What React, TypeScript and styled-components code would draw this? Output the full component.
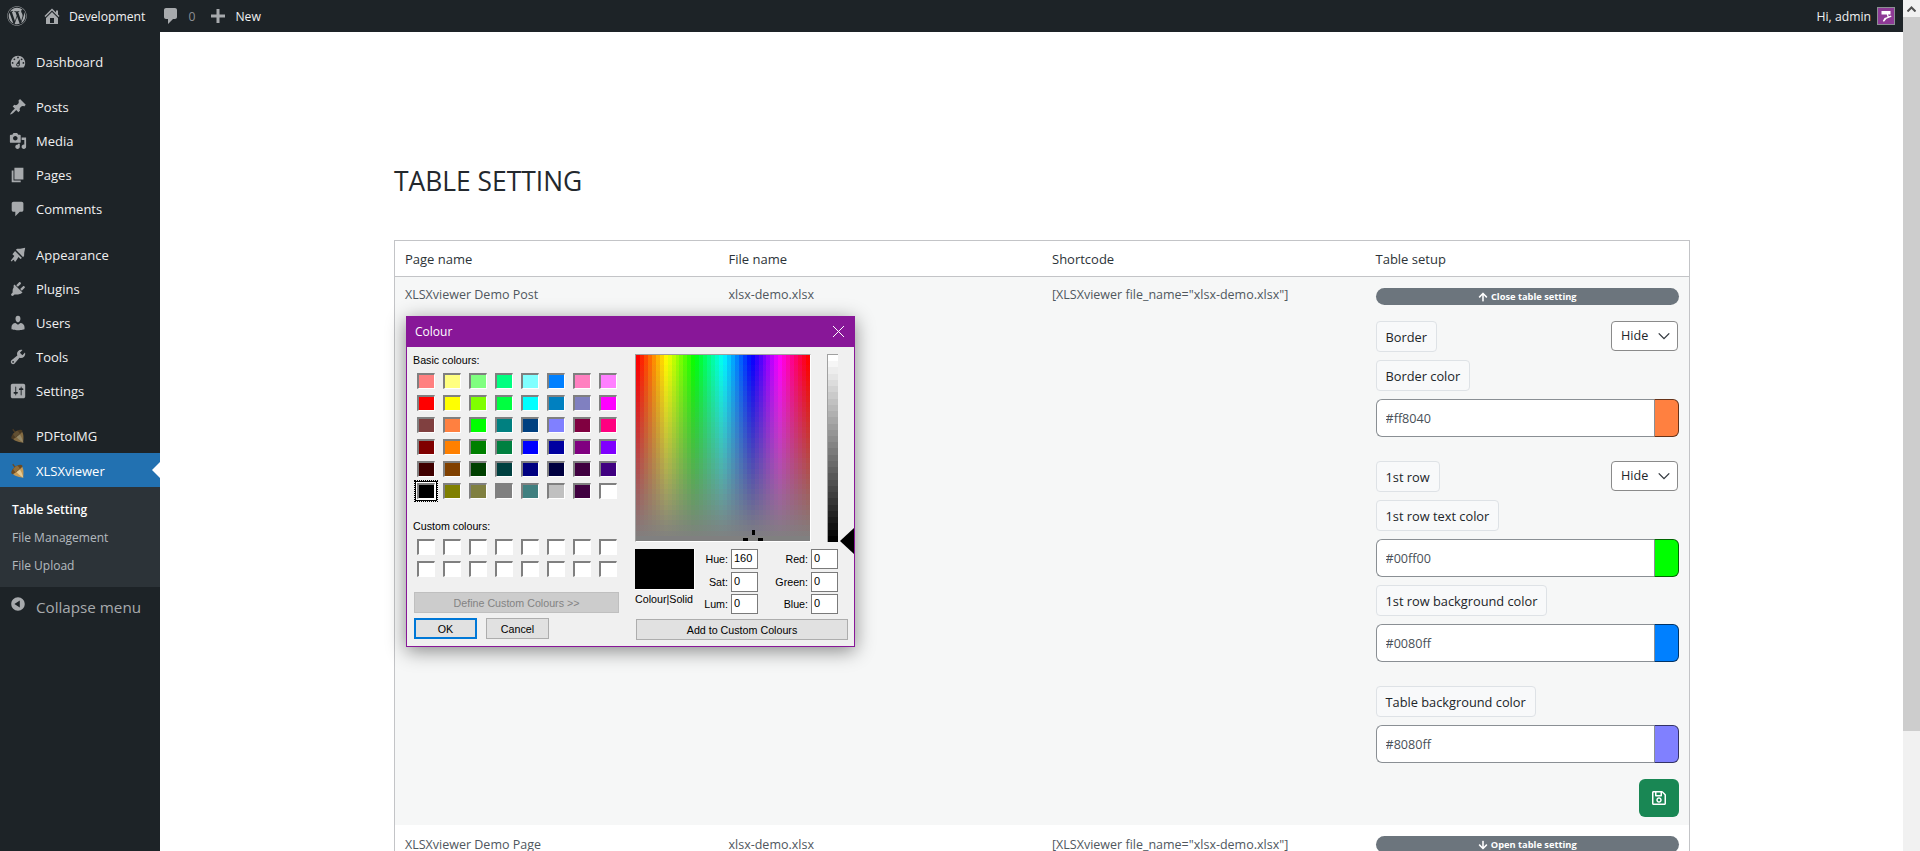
import React from "react";
import styled, { createGlobalStyle } from "styled-components";
import { FaWordpress, FaArrowUp, FaArrowDown, FaRegSave } from "react-icons/fa";

const uiFont = `"Open Sans", "Noto Sans", sans-serif`;
const winFont = `"Liberation Sans", Arial, sans-serif`;

const ICONS: Record<string, string> = {
  dashboard: "M3.76 16h12.48c1.1-1.37 1.76-3.11 1.76-5 0-4.42-3.58-8-8-8s-8 3.58-8 8c0 1.89.66 3.63 1.76 5zM10 4c.55 0 1 .45 1 1s-.45 1-1 1-1-.45-1-1 .45-1 1-1zM6 6c.55 0 1 .45 1 1s-.45 1-1 1-1-.45-1-1 .45-1 1-1zm8 0c.55 0 1 .45 1 1s-.45 1-1 1-1-.45-1-1 .45-1 1-1zm-5.37 5.55L12 7v6c0 1.1-.9 2-2 2s-2-.9-2-2c0-.57.24-1.08.63-1.45zM4 10c.55 0 1 .45 1 1s-.45 1-1 1-1-.45-1-1 .45-1 1-1zm12 0c.55 0 1 .45 1 1s-.45 1-1 1-1-.45-1-1 .45-1 1-1zm-5 3c0-.55-.45-1-1-1s-1 .45-1 1 .45 1 1 1 1-.45 1-1z",
  posts: "M10.44 3.02l1.82-1.82 6.36 6.35-1.83 1.82c-1.05-.68-2.48-.57-3.41.36l-.75.75c-.92.93-1.04 2.35-.35 3.41l-1.83 1.82-2.41-2.41-2.8 2.79c-.42.42-3.38 2.71-3.8 2.29s1.86-3.39 2.28-3.81l2.79-2.79L4.1 9.36l1.83-1.82c1.05.69 2.48.57 3.4-.36l.75-.75c.93-.92 1.05-2.35.36-3.41z",
  media: "M13 11V4c0-.55-.45-1-1-1h-1.67L9 1H5L3.67 3H2c-.55 0-1 .45-1 1v7c0 .55.45 1 1 1h10c.55 0 1-.45 1-1zM7 4.5c1.38 0 2.5 1.12 2.5 2.5S8.38 9.5 7 9.5 4.5 8.38 4.5 7 5.62 4.5 7 4.5zM14 6h5v10.5c0 1.38-1.12 2.5-2.5 2.5S14 17.88 14 16.5s1.12-2.5 2.5-2.5c.17 0 .34.02.5.05V9h-3V6zm-4 8.05V13h2v3.5c0 1.38-1.12 2.5-2.5 2.5S7 17.88 7 16.5 8.12 14 9.5 14c.17 0 .34.02.5.05z",
  pages: "M6 15V2h10v13H6zm-1 1h8v2H3V5h2v11z",
  comments: "M5 2h9c1.1 0 2 .9 2 2v7c0 1.1-.9 2-2 2h-2l-5 5v-5H5c-1.1 0-2-.9-2-2V4c0-1.1.9-2 2-2z",
  appearance: "M7.6 4.2l1.6-1.1 3.2-.1 5.6-1-1.1 5.6-.1 3.2-1.1 1.6zM6.7 5.6l7.7 7.7-1.7 1.1-2.1-2.1-3.5 5.1-1.5-.7.3-1.4-1.6.2-1.1 1.6-1.3-.8 4-5.1-2.1-2.1z",
  plugins: "M13.11 4.36L9.87 7.6 8 5.73l3.24-3.24c.35-.34 1.05-.2 1.56.32.52.51.66 1.21.31 1.55zm-8 1.77l.91-1.12 9.01 9.01-1.19.84c-.71.71-2.63 1.16-3.82 1.16H6.14L4.9 17.26c-.59.59-1.54.59-2.12 0-.59-.58-.59-1.53 0-2.12l1.24-1.24v-1.82c0-1.19.45-3.11 1.16-3.82zm7.26 3.97l3.24-3.24c.34-.35 1.04-.21 1.55.31.52.51.66 1.21.31 1.55l-3.24 3.25z",
  users: "M10 9.25c-2.27 0-2.73-3.44-2.73-3.44C7 4.02 7.82 2 9.97 2c2.16 0 2.98 2.02 2.71 3.81 0 0-.41 3.44-2.68 3.44zm0 2.57L12.72 10c2.39 0 4.52 2.33 4.52 4.53v2.49s-3.65 1.13-7.24 1.13c-3.65 0-7.24-1.13-7.24-1.13v-2.49c0-2.25 1.94-4.48 4.47-4.48z",
  tools: "M16.68 9.77c-1.34 1.34-3.3 1.67-4.95.99l-5.41 6.52c-.99.99-2.59.99-3.57 0-.99-.98-.99-2.58 0-3.57l6.52-5.42c-.68-1.65-.35-3.61.99-4.95 1.28-1.28 3.12-1.62 4.72-1.06l-2.89 2.89 2.82 2.82 2.86-2.87c.53 1.58.18 3.39-1.09 4.65zM3.81 16.21c.4.39 1.04.39 1.43 0 .4-.4.4-1.04 0-1.44-.39-.39-1.03-.39-1.43 0-.39.4-.39 1.04 0 1.44z",
  settings: "M18 16V4c0-1.1-.9-2-2-2H4c-1.1 0-2 .9-2 2v12c0 1.1.9 2 2 2h12c1.1 0 2-.9 2-2zM8 11h1c.55 0 1 .45 1 1s-.45 1-1 1H8v1.5c0 .28-.22.5-.5.5s-.5-.22-.5-.5V13H6c-.55 0-1-.45-1-1s.45-1 1-1h1V5.5c0-.28.22-.5.5-.5s.5.22.5.5V11zm5-2h-1c-.55 0-1-.45-1-1s.45-1 1-1h1V5.5c0-.28.22-.5.5-.5s.5.22.5.5V7h1c.55 0 1 .45 1 1s-.45 1-1 1h-1v5.5c0 .28-.22.5-.5.5s-.5-.22-.5-.5V9z",
  collapse: "M10 2.5c4.14 0 7.5 3.36 7.5 7.5s-3.36 7.5-7.5 7.5-7.5-3.36-7.5-7.5 3.36-7.5 7.5-7.5zM12 14V6l-6 4z",
  home: "M16 8.5l1.53 1.53-1.06 1.06L10 4.62l-6.47 6.47-1.06-1.06L10 2.5l4 4v-2h2v4zm-6-2.46l6 5.99V18H4v-5.97zM12 17v-5H8v5h4z",
  plus: "M17 8.5v3h-5.5V17h-3v-5.5H3v-3h5.5V3h3v5.5H17z",
};

const MENU_GROUPS = [
  [{ label: "Dashboard", icon: "dashboard" }],
  [
    { label: "Posts", icon: "posts" },
    { label: "Media", icon: "media" },
    { label: "Pages", icon: "pages" },
    { label: "Comments", icon: "comments" },
  ],
  [
    { label: "Appearance", icon: "appearance" },
    { label: "Plugins", icon: "plugins" },
    { label: "Users", icon: "users" },
    { label: "Tools", icon: "tools" },
    { label: "Settings", icon: "settings" },
  ],
];

const BASIC_COLOURS = [
  "#ff8080", "#ffff80", "#80ff80", "#00ff80", "#80ffff", "#0080ff", "#ff80c0", "#ff80ff",
  "#ff0000", "#ffff00", "#80ff00", "#00ff40", "#00ffff", "#0080c0", "#8080c0", "#ff00ff",
  "#804040", "#ff8040", "#00ff00", "#008080", "#004080", "#8080ff", "#800040", "#ff0080",
  "#800000", "#ff8000", "#008000", "#008040", "#0000ff", "#0000a0", "#800080", "#8000ff",
  "#400000", "#804000", "#004000", "#004040", "#000080", "#000040", "#400040", "#400080",
  "#000000", "#808000", "#808040", "#808080", "#408080", "#c0c0c0", "#400040", "#ffffff",
];

// the win32 picker is blocky, so hard-stop gradients rather than smooth ones
const steps = (count: number, colorAt: (t: number) => string, dir: string) => {
  const stops: string[] = [];
  for (let i = 0; i < count; i++) {
    const c = colorAt(i / (count - 1));
    stops.push(`${c} ${(i / count) * 100}%`, `${c} ${((i + 1) / count) * 100}%`);
  }
  return `linear-gradient(${dir}, ${stops.join(", ")})`;
};
const hueBands = steps(44, (t) => `hsl(${t * 360}, 100%, 50%)`, "to right");
const grayBands = steps(36, (t) => `rgba(128, 128, 128, ${t})`, "to bottom");
const lumBands = steps(30, (t) => {
  const v = Math.round(255 * (1 - t));
  return `rgb(${v}, ${v}, ${v})`;
}, "to bottom");

const GlobalStyle = createGlobalStyle`
  html, body {
    margin: 0;
    height: 100%;
    overflow: hidden;
    background: #fff;
  }
  * { box-sizing: border-box; }
`;

const Shell = styled.div`
  display: flex;
  height: 851px;
  font-family: ${uiFont};
`;

const Page = styled.div`
  flex: 1;
  min-width: 0;
  display: flex;
  flex-direction: column;
`;

const AdminBar = styled.header`
  height: 32px;
  flex: none;
  background: #1d2327;
  color: #f0f0f1;
  font-size: 12.2px;
  display: flex;
  align-items: center;
  justify-content: space-between;
  padding: 0 8px 0 7px;
`;

const BarGroup = styled.div`
  display: flex;
  align-items: center;
`;

const BarIcon = styled.svg<{ $left?: number }>`
  width: 20px;
  height: 20px;
  margin-left: ${(p) => p.$left || 0}px;
  fill: #a7aaad;
  flex: none;
`;

const BarText = styled.span<{ $left?: number; $dim?: boolean }>`
  margin-left: ${(p) => p.$left || 0}px;
  color: ${(p) => (p.$dim ? "#8c8f94" : "#f0f0f1")};
`;

const Avatar = styled.svg`
  width: 18px;
  height: 18px;
  margin-left: 6px;
  border: 1px solid #8c8f94;
  background: #8e3a96;
`;

const Body = styled.div`
  flex: 1;
  min-height: 0;
  display: flex;
`;

const Sidebar = styled.nav`
  width: 160px;
  flex: none;
  background: #1d2327;
  padding-top: 12px;
`;

const MenuGroup = styled.div`
  margin-bottom: 11px;
`;

const MenuItem = styled.div<{ $active?: boolean }>`
  position: relative;
  height: 34.2px;
  display: flex;
  align-items: center;
  padding: 1px 0 0 9px;
  font-size: 13px;
  color: ${(p) => (p.$active ? "#fff" : "#f0f0f1")};
  background: ${(p) => (p.$active ? "#2271b1" : "transparent")};
`;

const MenuIcon = styled.svg`
  width: 18px;
  height: 18px;
  margin-right: 9px;
  fill: #a7aaad;
  flex: none;
`;

const ActiveArrow = styled.span`
  position: absolute;
  right: 0;
  top: 50%;
  margin-top: -8px;
  border: 8px solid transparent;
  border-right-color: #fff;
  border-left-width: 0;
`;

const SubMenu = styled.div`
  background: #2c3338;
  padding: 8px 0 7px;
`;

const SubItem = styled.div<{ $current?: boolean }>`
  height: 28.2px;
  display: flex;
  align-items: center;
  padding-left: 12px;
  font-size: 12px;
  font-weight: ${(p) => (p.$current ? 600 : 400)};
  color: ${(p) => (p.$current ? "#fff" : "rgba(240, 246, 252, 0.7)")};
`;

const CollapseRow = styled.div`
  display: flex;
  align-items: flex-start;
  padding: 8px 0 0 9px;
  font-size: 15.2px;
  color: #a7aaad;
`;

const CollapseIcon = styled(MenuIcon)`
  margin-right: 9px;
`;

const CollapseLabel = styled.span`
  margin-top: 2px;
`;

const Main = styled.main`
  position: relative;
  flex: 1;
  min-width: 0;
  overflow: hidden;
  padding: 0 213px 0 234px;
  background: #fff;
`;

const Title = styled.h1`
  margin: 0;
  padding: 126px 0 36px;
  font-size: 26.4px;
  line-height: 46px;
  font-weight: 400;
  color: #23282d;
`;

const SettingsTable = styled.table`
  width: 100%;
  table-layout: fixed;
  border-collapse: separate;
  border-spacing: 0;
  border: 1px solid #c3c4c7;
  font-size: 12.5px;
  line-height: 16px;
`;

const HeadCell = styled.th`
  padding: 10px 10px 9px;
  height: 36px;
  text-align: left;
  font-size: 13px;
  font-weight: 400;
  color: #2c3338;
  border-bottom: 1px solid #c3c4c7;
`;

const Row = styled.tr<{ $alt?: boolean }>`
  background: ${(p) => (p.$alt ? "#f6f7f7" : "#fff")};
`;

const Cell = styled.td<{ $top?: number }>`
  vertical-align: top;
  padding: ${(p) => p.$top || 10}px 10px 10px;
  color: #50575e;
`;

const SetupCell = styled.td<{ $open?: boolean }>`
  vertical-align: top;
  padding: 11px 10px ${(p) => (p.$open ? 8 : 11)}px;
`;

const ToggleButton = styled.button`
  width: 100%;
  height: 17px;
  border: 0;
  border-radius: 9px;
  padding: 0;
  background: #6c757d;
  color: #fff;
  font-family: ${uiFont};
  font-size: 9.3px;
  font-weight: 700;
  display: flex;
  align-items: center;
  justify-content: center;
  gap: 3px;
`;

const SetupStack = styled.div`
  display: flex;
  flex-direction: column;
  gap: 24px;
  margin-top: 16px;
`;

const FieldGroup = styled.div`
  display: flex;
  flex-direction: column;
  gap: 8px;
`;

const LabelRow = styled.div`
  display: flex;
  align-items: flex-start;
  justify-content: space-between;
`;

const Tag = styled.span`
  align-self: flex-start;
  height: 31px;
  display: inline-flex;
  align-items: center;
  padding: 0 9px;
  border: 1px solid #dee2e6;
  border-radius: 4px;
  background: #f8f9fa;
  color: #212529;
  font-size: 12.8px;
`;

const SelectBox = styled.div`
  width: 67px;
  height: 30px;
  margin-right: 1px;
  display: flex;
  align-items: center;
  justify-content: space-between;
  padding: 0 6px 0 9px;
  border: 1px solid #8a8a8a;
  border-radius: 4px;
  background: #fff;
  color: #212529;
  font-size: 12.6px;
`;

const Chevron = styled.svg`
  width: 14px;
  height: 14px;
  fill: none;
  stroke: #343a40;
  stroke-width: 1.6;
`;

const ColorInput = styled.div`
  display: flex;
  height: 38px;
`;

const HexField = styled.input`
  flex: 1;
  min-width: 0;
  height: 100%;
  padding: 0 9px;
  border: 1px solid #8a8f94;
  border-right: 0;
  border-radius: 6px 0 0 6px;
  background: #fff;
  color: #495057;
  font-family: ${uiFont};
  font-size: 12.6px;
`;

const ColorChip = styled.span<{ $color: string }>`
  width: 25px;
  border: 1px solid rgba(0, 0, 0, 0.6);
  border-left-color: #8a8f94;
  border-radius: 0 6px 6px 0;
  background: ${(p) => p.$color};
`;

const SaveRow = styled.div`
  display: flex;
  justify-content: flex-end;
  margin-top: 16px;
`;

const SaveButton = styled.button`
  width: 40px;
  height: 38px;
  border: 0;
  border-radius: 6px;
  background: #198754;
  color: #fff;
  display: flex;
  align-items: center;
  justify-content: center;
  font-size: 16px;
`;

const Dialog = styled.div`
  position: absolute;
  left: 246px;
  top: 284px;
  width: 449px;
  height: 331px;
  border: 1px solid #881798;
  background: #f0f0f0;
  box-shadow: 0 4px 18px rgba(0, 0, 0, 0.45);
  font-family: ${winFont};
  font-size: 10.7px;
  color: #000;
  display: flex;
  flex-direction: column;
`;

const DialogTitle = styled.div`
  height: 30px;
  flex: none;
  background: #881798;
  color: #fff;
  font-family: ${uiFont};
  font-size: 12px;
  display: flex;
  align-items: center;
  justify-content: space-between;
  padding: 0 10px 2px 8px;
`;

const CloseIcon = styled.svg`
  width: 11px;
  height: 11px;
  stroke: #fff;
  stroke-width: 1;
  fill: none;
`;

const DialogBody = styled.div`
  flex: 1;
  display: flex;
  gap: 15px;
  padding: 7px 0 0 7px;
`;

const LeftPane = styled.div`
  width: 206px;
  flex: none;
  display: flex;
  flex-direction: column;
`;

const PaneLabel = styled.div<{ $top?: number }>`
  height: 13px;
  line-height: 13px;
  margin-top: ${(p) => p.$top || 0}px;
  margin-left: -1px;
`;

const SwatchGrid = styled.div`
  display: grid;
  grid-template-columns: repeat(8, 18px);
  grid-auto-rows: 16px;
  gap: 6px 8px;
  margin: 6px 0 0 3px;
`;

const Swatch = styled.div<{ $color?: string; $selected?: boolean }>`
  position: relative;
  background: ${(p) => p.$color || "#fff"};
  border-style: solid;
  border-width: 2px 1px 1px 2px;
  border-color: #808080 #fff #fff #808080;
  ${(p) => (p.$selected ? "box-shadow: 0 0 0 1px #fff, 0 0 0 2px #000;" : "")}
  &::after {
    content: "";
    display: ${(p) => (p.$selected ? "block" : "none")};
    position: absolute;
    inset: -5px -4px -4px -5px;
    border: 1px dotted #000;
  }
`;

const WinButton = styled.button<{ $primary?: boolean; $disabled?: boolean }>`
  height: 21px;
  padding: 0;
  font-family: ${winFont};
  font-size: 10.7px;
  color: ${(p) => (p.$disabled ? "#838383" : "#000")};
  background: ${(p) => (p.$disabled ? "#cccccc" : "#e1e1e1")};
  border: ${(p) => (p.$primary ? "2px solid #0078d7" : p.$disabled ? "1px solid #bfbfbf" : "1px solid #adadad")};
`;

const DefineButton = styled(WinButton)`
  width: 205px;
  margin-top: 15px;
`;

const ButtonRow = styled.div`
  display: flex;
  gap: 9px;
  margin-top: 5px;
`;

const DialogButton = styled(WinButton)`
  width: 63px;
`;

const RightPane = styled.div`
  width: 213px;
  display: flex;
  flex-direction: column;
`;

const PickerRow = styled.div`
  display: flex;
  gap: 16px;
`;

const Spectrum = styled.div`
  position: relative;
  width: 176px;
  height: 188px;
  overflow: hidden;
  border-style: solid;
  border-width: 1px;
  border-color: #a0a0a0 #fff #fff #a0a0a0;
  background: ${grayBands}, ${hueBands};
`;

const Crosshair = styled.svg`
  position: absolute;
  left: 107px;
  top: 175px;
  width: 20px;
  height: 12px;
  fill: #000;
`;

const LumBar = styled.div`
  position: relative;
  width: 11px;
  height: 188px;
  border: 1px solid #a0a0a0;
  border-width: 1px 0 0 1px;
  background: ${lumBands};
`;

const LumArrow = styled.span`
  position: absolute;
  left: 12px;
  top: 173px;
  border: 13.5px solid transparent;
  border-left-width: 0;
  border-right: 14px solid #000;
`;

const ValueRow = styled.div`
  display: flex;
  margin-top: 7px;
`;

const PreviewCol = styled.div`
  width: 60px;
  flex: none;
`;

const Preview = styled.div`
  height: 41px;
  background: #000;
  border-right: 1px solid #fff;
  border-bottom: 1px solid #fff;
`;

const PreviewCaption = styled.div`
  margin-top: 3px;
  white-space: nowrap;
`;

const ValueGrid = styled.div`
  display: grid;
  grid-template-columns: 33px 27px 47px 27px;
  grid-auto-rows: 20px;
  gap: 2.5px 3px;
`;

const ValueLabel = styled.label`
  display: flex;
  align-items: center;
  justify-content: flex-end;
`;

const ValueInput = styled.input`
  width: 27px;
  height: 20px;
  padding: 0 0 2px 2px;
  border: 1px solid #7a7a7a;
  background: #fff;
  color: #000;
  font-family: ${winFont};
  font-size: 11px;
`;

const AddButton = styled(WinButton)`
  width: 212px;
  margin: 5px 0 0 1px;
`;

const ScrollTrack = styled.aside`
  width: 17px;
  flex: none;
  background: #f1f1f1;
  display: flex;
  flex-direction: column;
`;

const ScrollArrow = styled.div`
  height: 17px;
  display: flex;
  align-items: center;
  justify-content: center;
`;

const ScrollThumb = styled.div`
  height: 714px;
  background: #cdcdcd;
`;

const ArrowGlyph = styled.svg`
  width: 9px;
  height: 6px;
  fill: none;
  stroke: #505050;
  stroke-width: 2;
`;

const Icon = ({ name, as: Comp = MenuIcon, left }: { name: string; as?: any; left?: number }) => (
  <Comp viewBox="0 0 20 20" $left={left}>
    <path fillRule="evenodd" d={ICONS[name]} />
  </Comp>
);

// plugin menu icon, the acorn leans with its tip to the lower right
const Acorn = ({ dim }: { dim?: boolean }) => (
  <MenuIcon viewBox="0 0 20 20" style={{ opacity: dim ? 0.6 : 1 }}>
    <g transform="rotate(-38 10 10)">
      <path fill="#c79b55" d="M3.5 8.5C3.5 13 7.5 16.5 10 19.5 12.5 16.5 16.5 13 16.5 8.5z" />
      <path fill="#e6cb92" d="M8 8.5C7.8 12.5 8.8 16 10 19.5 11.5 16 12.8 12.5 12.5 8.5z" />
      <path fill="#6b4a22" d="M2.5 8.5C2.5 3 17.5 3 17.5 8.5 17.5 10.3 2.5 10.3 2.5 8.5z" />
      <path fill="#8f6d3a" d="M7 5C6.5 6.5 6.5 8 7 9.3h6c.5-1.3.5-2.8 0-4.3-2-.7-4-.7-6 0z" />
      <path fill="#6b4a22" d="M9.3.5h1.4v4H9.3z" />
    </g>
  </MenuIcon>
);

const ColorField = ({ value }: { value: string }) => (
  <ColorInput>
    <HexField readOnly value={value} />
    <ColorChip $color={value} />
  </ColorInput>
);

const HideSelect = () => (
  <SelectBox>
    Hide
    <Chevron viewBox="0 0 16 16">
      <path d="M2 5l6 6 6-6" />
    </Chevron>
  </SelectBox>
);

const ColourDialog = () => (
  <Dialog>
    <DialogTitle>
      Colour
      <CloseIcon viewBox="0 0 11 11">
        <path d="M0 0l11 11M11 0L0 11" />
      </CloseIcon>
    </DialogTitle>
    <DialogBody>
      <LeftPane>
        <PaneLabel>Basic colours:</PaneLabel>
        <SwatchGrid>
          {BASIC_COLOURS.map((c, i) => (
            <Swatch key={i} $color={c} $selected={i === 40} />
          ))}
        </SwatchGrid>
        <PaneLabel $top={21}>Custom colours:</PaneLabel>
        <SwatchGrid>
          {Array.from({ length: 16 }).map((_, i) => (
            <Swatch key={i} />
          ))}
        </SwatchGrid>
        <DefineButton $disabled>Define Custom Colours &gt;&gt;</DefineButton>
        <ButtonRow>
          <DialogButton $primary>OK</DialogButton>
          <DialogButton>Cancel</DialogButton>
        </ButtonRow>
      </LeftPane>
      <RightPane>
        <PickerRow>
          <Spectrum>
            <Crosshair viewBox="0 0 20 12">
              <path d="M9 0h3v5H9zM0 8h5v4H0zM15 8h5v4h-5z" />
            </Crosshair>
          </Spectrum>
          <LumBar>
            <LumArrow />
          </LumBar>
        </PickerRow>
        <ValueRow>
          <PreviewCol>
            <Preview />
            <PreviewCaption>Colour|Solid</PreviewCaption>
          </PreviewCol>
          <ValueGrid>
            <ValueLabel>Hue:</ValueLabel>
            <ValueInput readOnly value="160" />
            <ValueLabel>Red:</ValueLabel>
            <ValueInput readOnly value="0" />
            <ValueLabel>Sat:</ValueLabel>
            <ValueInput readOnly value="0" />
            <ValueLabel>Green:</ValueLabel>
            <ValueInput readOnly value="0" />
            <ValueLabel>Lum:</ValueLabel>
            <ValueInput readOnly value="0" />
            <ValueLabel>Blue:</ValueLabel>
            <ValueInput readOnly value="0" />
          </ValueGrid>
        </ValueRow>
        <AddButton>Add to Custom Colours</AddButton>
      </RightPane>
    </DialogBody>
  </Dialog>
);

const App = () => (
  <Shell>
    <GlobalStyle />
    <Page>
      <AdminBar>
        <BarGroup>
          <BarIcon as={FaWordpress} />
          <Icon name="home" as={BarIcon} left={15} />
          <BarText $left={7}>Development</BarText>
          <Icon name="comments" as={BarIcon} left={16} />
          <BarText $left={7} $dim>0</BarText>
          <Icon name="plus" as={BarIcon} left={13} />
          <BarText $left={7}>New</BarText>
        </BarGroup>
        <BarGroup>
          <BarText>Hi, admin</BarText>
          <Avatar viewBox="0 0 16 16">
            <path fill="#fff" d="M3.5 3h9v3.5H10l.8 1.7 2.2-.7.5 1.3-5 2-2.5 3-1.2-.8 1.7-3 3-1-.7-2.5H3.5z" />
          </Avatar>
        </BarGroup>
      </AdminBar>
      <Body>
        <Sidebar>
          {MENU_GROUPS.map((group, g) => (
            <MenuGroup key={g}>
              {group.map((item) => (
                <MenuItem key={item.label}>
                  <Icon name={item.icon} />
                  {item.label}
                </MenuItem>
              ))}
            </MenuGroup>
          ))}
          <MenuItem>
            <Acorn dim />
            PDFtoIMG
          </MenuItem>
          <MenuItem $active>
            <Acorn />
            XLSXviewer
            <ActiveArrow />
          </MenuItem>
          <SubMenu>
            <SubItem $current>Table Setting</SubItem>
            <SubItem>File Management</SubItem>
            <SubItem>File Upload</SubItem>
          </SubMenu>
          <CollapseRow>
            <Icon name="collapse" as={CollapseIcon} />
            <CollapseLabel>Collapse menu</CollapseLabel>
          </CollapseRow>
        </Sidebar>
        <Main>
          <Title>TABLE SETTING</Title>
          <SettingsTable>
            <thead>
              <tr>
                <HeadCell>Page name</HeadCell>
                <HeadCell>File name</HeadCell>
                <HeadCell>Shortcode</HeadCell>
                <HeadCell>Table setup</HeadCell>
              </tr>
            </thead>
            <tbody>
              <Row $alt>
                <Cell>XLSXviewer Demo Post</Cell>
                <Cell>xlsx-demo.xlsx</Cell>
                <Cell>[XLSXviewer file_name="xlsx-demo.xlsx"]</Cell>
                <SetupCell $open>
                  <ToggleButton>
                    <FaArrowUp size={10} />
                    Close table setting
                  </ToggleButton>
                  <SetupStack>
                    <FieldGroup>
                      <LabelRow>
                        <Tag>Border</Tag>
                        <HideSelect />
                      </LabelRow>
                      <Tag>Border color</Tag>
                      <ColorField value="#ff8040" />
                    </FieldGroup>
                    <FieldGroup>
                      <LabelRow>
                        <Tag>1st row</Tag>
                        <HideSelect />
                      </LabelRow>
                      <Tag>1st row text color</Tag>
                      <ColorField value="#00ff00" />
                      <Tag>1st row background color</Tag>
                      <ColorField value="#0080ff" />
                    </FieldGroup>
                    <FieldGroup>
                      <Tag>Table background color</Tag>
                      <ColorField value="#8080ff" />
                    </FieldGroup>
                  </SetupStack>
                  <SaveRow>
                    <SaveButton>
                      <FaRegSave />
                    </SaveButton>
                  </SaveRow>
                </SetupCell>
              </Row>
              <Row>
                <Cell $top={12}>XLSXviewer Demo Page</Cell>
                <Cell $top={12}>xlsx-demo.xlsx</Cell>
                <Cell $top={12}>[XLSXviewer file_name="xlsx-demo.xlsx"]</Cell>
                <SetupCell>
                  <ToggleButton>
                    <FaArrowDown size={10} />
                    Open table setting
                  </ToggleButton>
                </SetupCell>
              </Row>
            </tbody>
          </SettingsTable>
          <ColourDialog />
        </Main>
      </Body>
    </Page>
    <ScrollTrack>
      <ScrollArrow>
        <ArrowGlyph viewBox="0 0 9 6">
          <path d="M0.5 5.5l4-4 4 4" />
        </ArrowGlyph>
      </ScrollArrow>
      <ScrollThumb />
    </ScrollTrack>
  </Shell>
);

export default App;
